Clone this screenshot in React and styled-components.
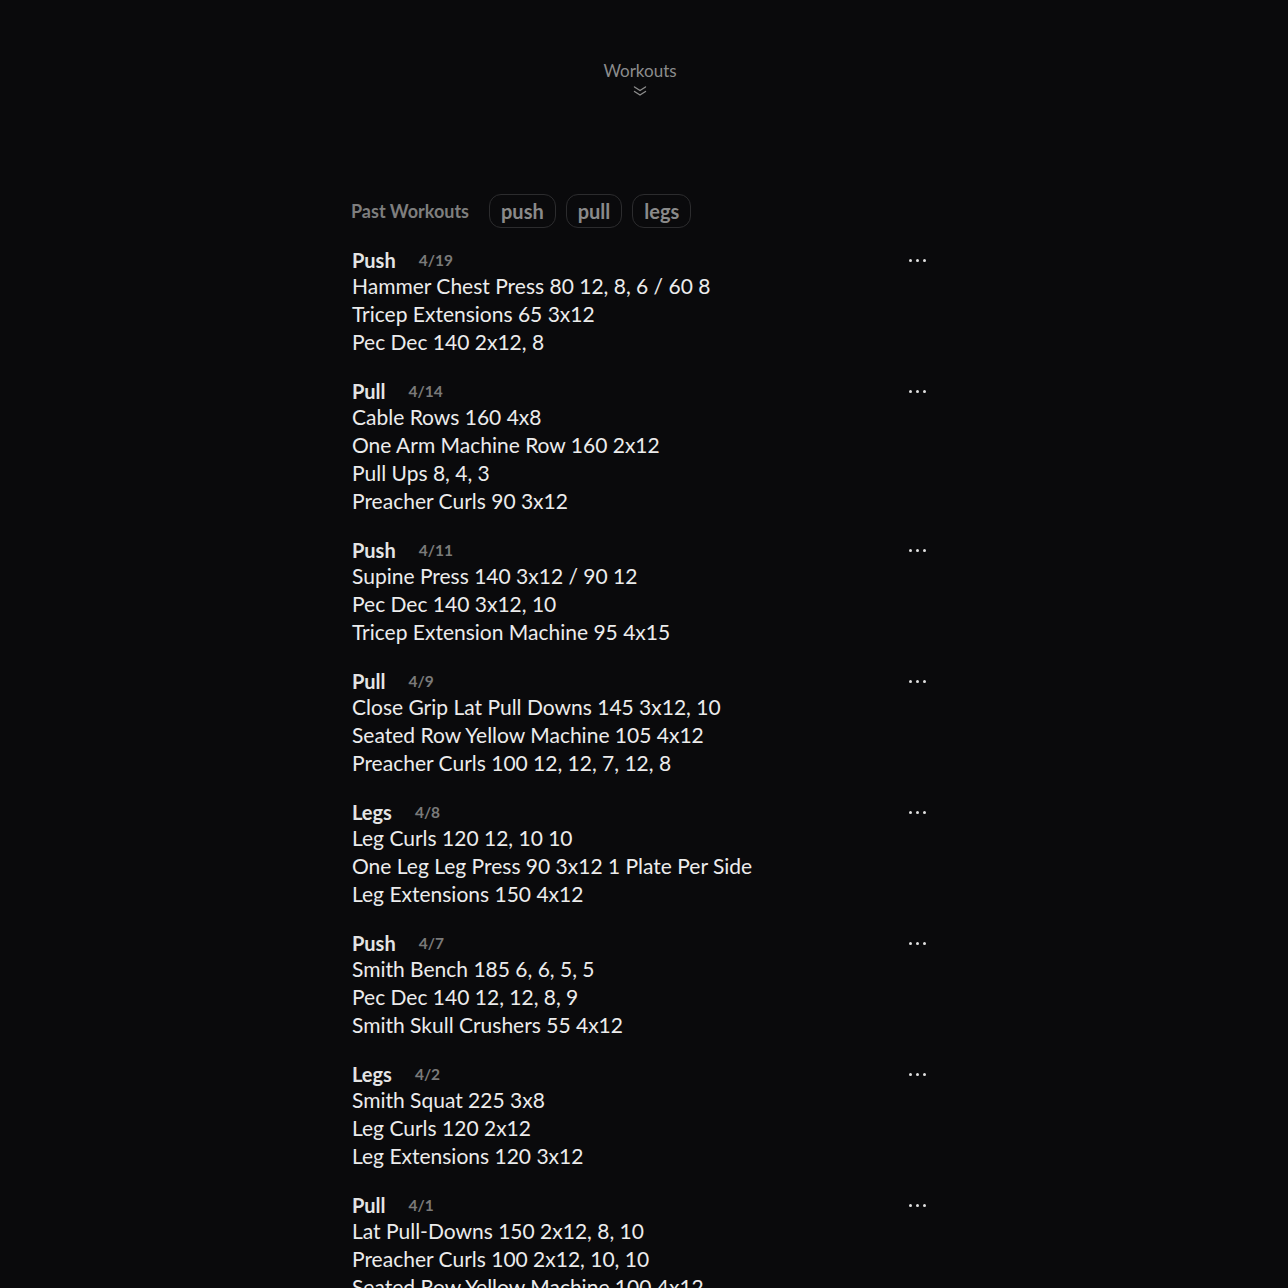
import React from "react";
import styled, { createGlobalStyle } from "styled-components";

const GlobalStyle = createGlobalStyle`
  html, body {
    margin: 0;
    padding: 0;
    background: #0a0a0c;
  }
  body {
    font-family: Lato, "Noto Sans", sans-serif;
    color: #e8e8e8;
  }
`;

const Page = styled.div`
  min-height: 1288px;
  background: #0a0a0c;
  display: flex;
  flex-direction: column;
  align-items: center;
`;

const TopNav = styled.div`
  flex-shrink: 0;
  display: flex;
  flex-direction: column;
  align-items: center;
  padding-top: 61px;
  margin-right: 8px;
  height: 194px;
  box-sizing: border-box;
  gap: 4px;
`;

const NavTitle = styled.span`
  font-size: 17px;
  line-height: 20px;
  color: #8c8c8c;
`;

const Column = styled.div`
  flex-shrink: 0;
  width: 584px;
  display: flex;
  flex-direction: column;
`;

const FilterRow = styled.div`
  display: flex;
  align-items: center;
  gap: 10px;
  margin-left: -1px;
  margin-bottom: 20px;
`;

const FilterLabel = styled.span`
  font-size: 18px;
  font-weight: 700;
  color: #7e7e7e;
  margin-right: 10px;
`;

const Pill = styled.button`
  height: 34px;
  padding: 0 11px;
  border-radius: 12px;
  border: 1px solid #2c2c2e;
  background: transparent;
  color: #8a8a8a;
  font-family: inherit;
  font-size: 20px;
  font-weight: 700;
`;

const Group = styled.div`
  margin-bottom: 23px;
`;

const GroupHead = styled.div`
  display: flex;
  align-items: center;
  height: 24px;
`;

const GroupName = styled.span`
  font-size: 20px;
  font-weight: 700;
  color: #e4e4e4;
  margin-right: 23px;
`;

const GroupDate = styled.span`
  font-size: 15.5px;
  font-weight: 700;
  color: #7a7a7a;
`;

const Dots = styled.span`
  margin-left: auto;
  margin-right: 10px;
  display: flex;
  gap: 4px;
`;

const Dot = styled.span`
  width: 3px;
  height: 3px;
  background: #e0e0e0;
  border-radius: 50%;
`;

const Line = styled.div`
  font-size: 21px;
  line-height: 28px;
  color: #ececec;
  white-space: nowrap;
`;

const workouts = [
  { name: "Push", date: "4/19", lines: ["Hammer Chest Press 80 12, 8, 6 / 60 8", "Tricep Extensions 65 3x12", "Pec Dec 140 2x12, 8"] },
  { name: "Pull", date: "4/14", lines: ["Cable Rows 160 4x8", "One Arm Machine Row 160 2x12", "Pull Ups 8, 4, 3", "Preacher Curls 90 3x12"] },
  { name: "Push", date: "4/11", lines: ["Supine Press 140 3x12 / 90 12", "Pec Dec 140 3x12, 10", "Tricep Extension Machine 95 4x15"] },
  { name: "Pull", date: "4/9", lines: ["Close Grip Lat Pull Downs 145 3x12, 10", "Seated Row Yellow Machine 105 4x12", "Preacher Curls 100 12, 12, 7, 12, 8"] },
  { name: "Legs", date: "4/8", lines: ["Leg Curls 120 12, 10 10", "One Leg Leg Press 90 3x12 1 Plate Per Side", "Leg Extensions 150 4x12"] },
  { name: "Push", date: "4/7", lines: ["Smith Bench 185 6, 6, 5, 5", "Pec Dec 140 12, 12, 8, 9", "Smith Skull Crushers 55 4x12"] },
  { name: "Legs", date: "4/2", lines: ["Smith Squat 225 3x8", "Leg Curls 120 2x12", "Leg Extensions 120 3x12"] },
  { name: "Pull", date: "4/1", lines: ["Lat Pull-Downs 150 2x12, 8, 10", "Preacher Curls 100 2x12, 10, 10", "Seated Row Yellow Machine 100 4x12"] },
];

function Chevrons() {
  return (
    <svg width="14" height="12" viewBox="0 0 14 12" fill="none" stroke="#8c8c8c" strokeWidth="1.4" strokeLinecap="round" strokeLinejoin="round">
      <path d="M1.5 2l5.5 3.5 5.5-3.5" />
      <path d="M1.5 6.5l5.5 3.5 5.5-3.5" />
    </svg>
  );
}

export default function App() {
  return (
    <Page>
      <GlobalStyle />
      <TopNav>
        <NavTitle>Workouts</NavTitle>
        <Chevrons />
      </TopNav>
      <Column>
        <FilterRow>
          <FilterLabel>Past Workouts</FilterLabel>
          <Pill>push</Pill>
          <Pill>pull</Pill>
          <Pill>legs</Pill>
        </FilterRow>
        {workouts.map((w, i) => (
          <Group key={i}>
            <GroupHead>
              <GroupName>{w.name}</GroupName>
              <GroupDate>{w.date}</GroupDate>
              <Dots>
                <Dot />
                <Dot />
                <Dot />
              </Dots>
            </GroupHead>
            {w.lines.map((l, j) => (
              <Line key={j}>{l}</Line>
            ))}
          </Group>
        ))}
      </Column>
    </Page>
  );
}
